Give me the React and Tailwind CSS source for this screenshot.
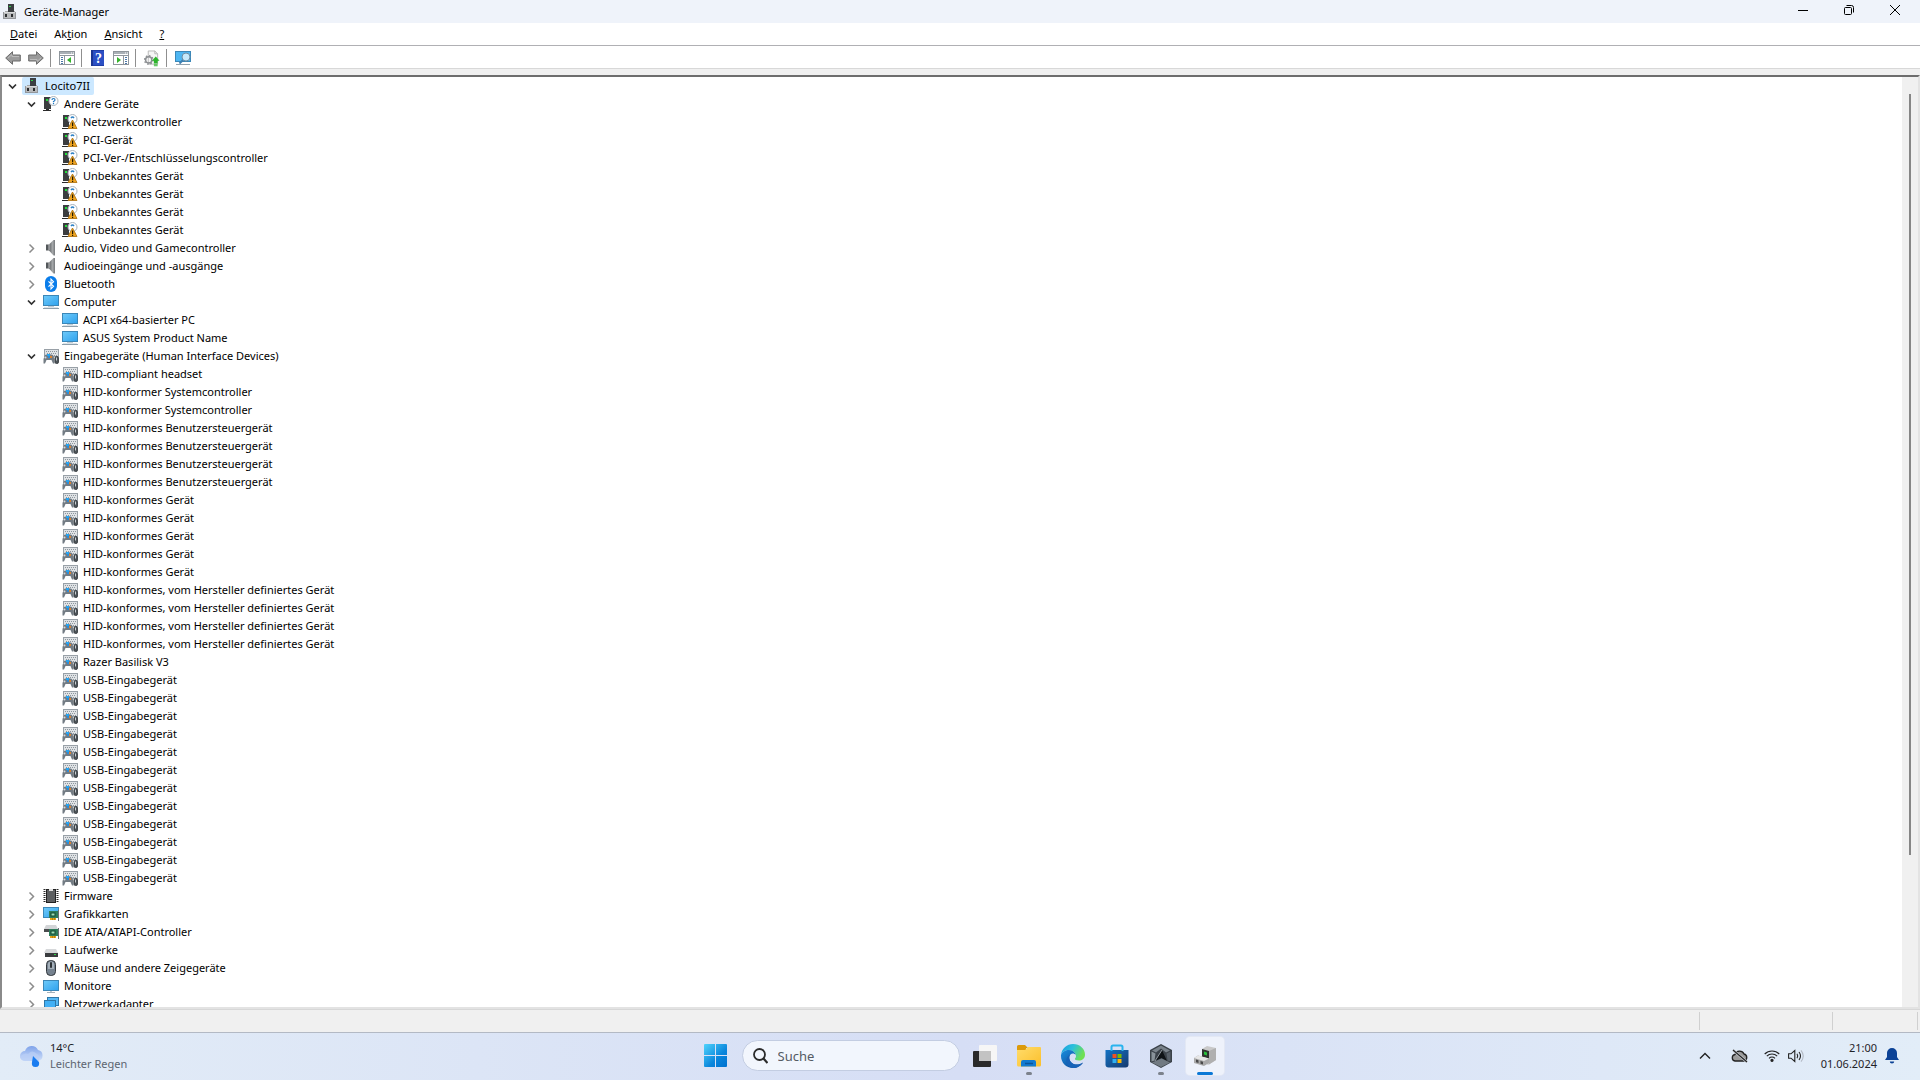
import { useState } from "react";

function RootIcon() {
  return (
    <svg width="16" height="16" viewBox="0 0 16 16" className="shrink-0">
      <rect x="6" y="0" width="6" height="9" fill="#3c3f42" />
      <rect x="7" y="2" width="2" height="1" fill="#2fd14a" />
      <path d="M3 7h3v2H3zM12 7h1v2h-1z" fill="#a4a7aa" />
      <rect x="1.500" y="8.500" width="12" height="6" fill="#b9bbbd" stroke="#93969a" />
      <rect x="2" y="8" width="11" height="1" fill="#d8dadb" />
      <rect x="3" y="10" width="2" height="3" fill="#2c2e30" />
      <rect x="9" y="10" width="2" height="3" fill="#2c2e30" />
    </svg>
  );
}

function UnknownIcon() {
  return (
    <svg width="16" height="16" viewBox="0 0 16 16" className="shrink-0">
      <rect x="1" y="1" width="7" height="12" fill="#3b3d3f" />
      <rect x="3" y="3" width="2" height="2" fill="#22e03a" />
      <path d="M0 14h8v1H0zM3 13h3v1H3z" fill="#2b2b2b" />
      <circle cx="10.500" cy="5" r="4.500" fill="#fff" stroke="#a9b2bb" />
      <path d="M9 4q0-1.500 1.500-1.500T12 4q0 .8-1.500 1.500V6.300M10.500 7v1.200" fill="none" stroke="#1f78c4" strokeWidth="1.200" />
    </svg>
  );
}

function WarningIcon() {
  return (
    <svg width="16" height="16" viewBox="0 0 16 16" className="shrink-0">
      <rect x="1" y="1" width="6" height="12" fill="#3b3d3f" />
      <rect x="3" y="3" width="2" height="2" fill="#22e03a" />
      <path d="M0 14h6v1H0z" fill="#2b2b2b" />
      <circle cx="10.500" cy="5" r="4.500" fill="#fff" stroke="#a9b2bb" />
      <path d="M9 4q1.500-2 3 0" stroke="#2a7fc4" fill="none" strokeWidth="1.500" />
      <path d="M10.500 6L15 14.500H6z" fill="#efa41f" stroke="#a86c0a" strokeWidth=".8" />
      <path d="M10 8.500h1.200v3.500H10zM10 12.800h1.200v1.200H10z" fill="#1f1600" />
    </svg>
  );
}

function SpeakerIcon() {
  return (
    <svg width="16" height="16" viewBox="0 0 16 16" className="shrink-0">
      <defs>
        <linearGradient id="spk" x1="0" x2="1">
          <stop offset="0" stopColor="#5f6265" />
          <stop offset=".6" stopColor="#a5a8aa" />
          <stop offset="1" stopColor="#74777a" />
        </linearGradient>
      </defs>
      <path d="M3 4.500h3v6H3z" fill="#53575a" />
      <path d="M6 4.500l4.500-4.500H12v15.500h-1.500L6 10.500z" fill="url(#spk)" />
      <path d="M6 4.500v6" stroke="#d9dbdc" strokeWidth=".8" />
    </svg>
  );
}

function BluetoothIcon() {
  return (
    <svg width="16" height="16" viewBox="0 0 16 16" className="shrink-0">
      <rect x="2" y="0" width="12" height="16" rx="6" fill="#0a7dea" />
      <path d="M5.500 5.300l5 5L8 12.800V3.200l2.500 2.500-5 5" fill="none" stroke="#fff" strokeWidth="1.100" />
    </svg>
  );
}

function ScreenShape({ y }) {
  return (
    <>
      <defs>
        <linearGradient id="scr" x1="0" y1="0" x2="1" y2="1">
          <stop offset="0" stopColor="#6fcaf9" />
          <stop offset="1" stopColor="#2fa2ee" />
        </linearGradient>
      </defs>
      <rect x=".5" y={y + 0.5} width="15" height="10" fill="url(#scr)" stroke="#3b87b8" />
    </>
  );
}

function ComputerIcon() {
  return (
    <svg width="16" height="16" viewBox="0 0 16 16" className="shrink-0">
      <ScreenShape y={1} />
      <path d="M5 12h6v1H5z" fill="#c2ccd3" />
      <path d="M0 14h16v1H0z" fill="#8fa0ac" />
      <path d="M1 13h14v1H1z" fill="#dce3e8" />
    </svg>
  );
}

function MonitorIcon() {
  return (
    <svg width="16" height="16" viewBox="0 0 16 16" className="shrink-0">
      <ScreenShape y={2} />
      <path d="M7 13h2v1H7z" fill="#c2ccd3" />
      <path d="M4 14h8v1H4z" fill="#a3b1bb" />
    </svg>
  );
}

function HidIcon() {
  return (
    <svg width="16" height="16" viewBox="0 0 16 16" className="shrink-0">
      <rect x="1.500" y="1.500" width="14" height="7" fill="#dfe2e5" stroke="#98a0a7" />
      <path d="M3 3.500h11M4 5.500h10M3 7.500h11" stroke="#8d969d" strokeDasharray="1 1" />
      <path d="M2 7c2-1 6-1 8 0l1.500 4v4.500H10L8.500 12h-5L2 15.500H.5V11z" fill="#737c84" />
      <circle cx="2.500" cy="9.500" r="1" fill="#d5dade" />
      <rect x="4" y="6" width="3" height="2" fill="#25a4f2" />
      <rect x="5" y="8" width="2" height="2" fill="#2c8bd6" />
      <rect x="7" y="8" width="2" height="2" fill="#d98232" />
      <rect x="12" y="8.500" width="3.500" height="7" rx="1.500" fill="#4d5459" stroke="#2f3437" strokeWidth=".8" />
      <path d="M13.500 9.500v3" stroke="#c9ced2" />
    </svg>
  );
}

function FirmwareIcon() {
  return (
    <svg width="16" height="16" viewBox="0 0 16 16" className="shrink-0">
      <path d="M1.500 1v14M14.500 1v14" stroke="#2b2b2b" strokeWidth="2" strokeDasharray="1 1" />
      <rect x="3.500" y="1.500" width="9" height="13" fill="#5d5f61" stroke="#222" />
      <path d="M6 1h4v2H6z" fill="#e0e0e0" />
    </svg>
  );
}

function Board() {
  return (
    <>
      <rect x="6" y="5" width="9" height="7" fill="#2f7d5b" />
      <rect x="8" y="7" width="4" height="3" fill="#9fe0b8" stroke="#154a33" />
      <path d="M15.500 4v11" stroke="#6a7075" />
      <path d="M7 12h6v2H7z" fill="#e8a317" />
      <path d="M9.500 12v2M11.500 12v2" stroke="#a06c05" strokeWidth=".6" />
    </>
  );
}

function GraphicsIcon() {
  return (
    <svg width="16" height="16" viewBox="0 0 16 16" className="shrink-0">
      <ScreenShape y={1} />
      <Board />
    </svg>
  );
}

function IdeIcon() {
  return (
    <svg width="16" height="16" viewBox="0 0 16 16" className="shrink-0">
      <path d="M3 1h10l2 4H1z" fill="#d3d5d7" />
      <path d="M1 5h14v3H1z" fill="#4a4c4e" />
      <Board />
    </svg>
  );
}

function DriveIcon() {
  return (
    <svg width="16" height="16" viewBox="0 0 16 16" className="shrink-0">
      <path d="M3 7h10l2 4H1z" fill="#d6d8da" />
      <path d="M2 11h13v4H2z" fill="#3b3d3f" />
      <rect x="11" y="12" width="2" height="1" fill="#35d04a" />
    </svg>
  );
}

function MouseIcon() {
  return (
    <svg width="16" height="16" viewBox="0 0 16 16" className="shrink-0">
      <rect x="3.500" y=".5" width="9" height="15" rx="4" fill="#75828f" stroke="#33383d" />
      <path d="M5 4q0-2.500 3-2.500T11 4v5H5z" fill="#a4afb9" />
      <rect x="7" y="2" width="2" height="6" rx="1" fill="#2e3337" />
    </svg>
  );
}

function NetworkIcon() {
  return (
    <svg width="16" height="16" viewBox="0 0 16 16" className="shrink-0">
      <rect x="4.500" y="1.500" width="11" height="8" fill="#56b9f5" stroke="#2f78a8" />
      <rect x="1.500" y="4.500" width="11" height="8" fill="#42b0f5" stroke="#2f78a8" />
      <path d="M4 14h6v1H4z" fill="#93a3af" />
    </svg>
  );
}

const repeat = (name, count) => Array(count).fill(name);

const categories = [
  {
    name: "Andere Geräte",
    icon: UnknownIcon,
    childIcon: WarningIcon,
    children: ["Netzwerkcontroller", "PCI-Gerät", "PCI-Ver-/Entschlüsselungscontroller", ...repeat("Unbekanntes Gerät", 4)],
  },
  { name: "Audio, Video und Gamecontroller", icon: SpeakerIcon },
  { name: "Audioeingänge und -ausgänge", icon: SpeakerIcon },
  { name: "Bluetooth", icon: BluetoothIcon },
  {
    name: "Computer",
    icon: ComputerIcon,
    childIcon: ComputerIcon,
    children: ["ACPI x64-basierter PC", "ASUS System Product Name"],
  },
  {
    name: "Eingabegeräte (Human Interface Devices)",
    icon: HidIcon,
    childIcon: HidIcon,
    children: [
      "HID-compliant headset",
      ...repeat("HID-konformer Systemcontroller", 2),
      ...repeat("HID-konformes Benutzersteuergerät", 4),
      ...repeat("HID-konformes Gerät", 5),
      ...repeat("HID-konformes, vom Hersteller definiertes Gerät", 4),
      "Razer Basilisk V3",
      ...repeat("USB-Eingabegerät", 12),
    ],
  },
  { name: "Firmware", icon: FirmwareIcon },
  { name: "Grafikkarten", icon: GraphicsIcon },
  { name: "IDE ATA/ATAPI-Controller", icon: IdeIcon },
  { name: "Laufwerke", icon: DriveIcon },
  { name: "Mäuse und andere Zeigegeräte", icon: MouseIcon },
  { name: "Monitore", icon: MonitorIcon },
  { name: "Netzwerkadapter", icon: NetworkIcon },
];

function Chevron({ open }) {
  return open ? (
    <svg width="10" height="10" viewBox="0 0 10 10">
      <path d="M1 3.500l3.500 3.500L8 3.500" fill="none" stroke="#303030" strokeWidth="1.700" />
    </svg>
  ) : (
    <svg width="10" height="10" viewBox="0 0 10 10">
      <path d="M2.500 1.500l4 4-4 4" fill="none" stroke="#8c8c8c" strokeWidth="1.500" />
    </svg>
  );
}

function Row({ name, icon: Icon, open, onToggle, selected }) {
  return (
    <div className="flex h-[18px] items-center">
      {onToggle ? (
        <button onClick={onToggle} aria-label={name} aria-expanded={open} className="flex h-[18px] w-[19px] items-center justify-center">
          <Chevron open={open} />
        </button>
      ) : (
        <span className="w-[19px]" />
      )}
      <span className={`flex h-[18px] items-center gap-[5px] rounded-xs pr-1 pl-[2px] whitespace-nowrap ${selected ? "bg-[#cce8ff]" : ""}`}>
        <Icon />
        {name}
      </span>
    </div>
  );
}

function Category({ item, startOpen }) {
  const [open, setOpen] = useState(startOpen);
  return (
    <li>
      <Row name={item.name} icon={item.icon} open={open} onToggle={() => setOpen(!open)} />
      {open && item.children && (
        <ul className="pl-[19px]">
          {item.children.map((child, i) => (
            <li key={i}>
              <Row name={child} icon={item.childIcon} />
            </li>
          ))}
        </ul>
      )}
    </li>
  );
}

function DeviceTree() {
  const [open, setOpen] = useState(true);
  return (
    <ul className="pl-px">
      <li>
        <Row name="Locito7II" icon={RootIcon} open={open} onToggle={() => setOpen(!open)} selected />
        {open && (
          <ul className="pl-[19px]">
            {categories.map((item) => (
              <Category key={item.name} item={item} startOpen={Boolean(item.children)} />
            ))}
          </ul>
        )}
      </li>
    </ul>
  );
}

function TitleBar() {
  return (
    <header className="flex h-[23px] shrink-0 items-center bg-[#eff3fa] pr-[2px] pl-[2px]">
      <RootIcon />
      <h1 className="ml-[6px] flex-1">Geräte-Manager</h1>
      <div className="flex h-full pb-[3px]">
        <button aria-label="Minimieren" className="flex w-[46px] items-center justify-center">
          <svg width="10" height="10" viewBox="0 0 10 10"><path d="M0 5.500h10" stroke="#000" /></svg>
        </button>
        <button aria-label="Verkleinern" className="flex w-[45px] items-center justify-center">
          <svg width="10" height="10" viewBox="0 0 10 10" fill="none" stroke="#000">
            <rect x=".5" y="2.500" width="7" height="7" rx="1" />
            <path d="M2.500.5H7.500q2 0 2 2V7.500" />
          </svg>
        </button>
        <button aria-label="Schließen" className="flex w-[47px] items-center justify-center">
          <svg width="10" height="10" viewBox="0 0 10 10"><path d="M0 0l10 10M10 0L0 10" stroke="#000" /></svg>
        </button>
      </div>
    </header>
  );
}

function MenuBar() {
  return (
    <nav className="flex h-[23px] shrink-0 items-center gap-[17px] border-b border-[#b0b0b4] bg-white pl-[10px]">
      <button><u>D</u>atei</button>
      <button>Ak<u>t</u>ion</button>
      <button><u>A</u>nsicht</button>
      <button><u>?</u></button>
    </nav>
  );
}

function Separator() {
  return <span className="h-[18px] w-px bg-[#8f8f8f]" />;
}

function Arrow({ flip }) {
  return (
    <svg width="16" height="14" viewBox="0 0 16 14" className={flip ? "rotate-180" : ""}>
      <path d="M.7 7L7.500.7V4h7.800v6H7.500v3.300z" fill="#9b9b9b" stroke="#6b6b6b" />
      <path d="M3 7l4-3.500V5.500h7" fill="none" stroke="#bcbcbc" />
    </svg>
  );
}

function PaneIcon({ right }) {
  return (
    <svg width="16" height="14" viewBox="0 0 16 14">
      <rect x=".5" y=".5" width="15" height="13" fill="#fff" stroke="#8f969c" />
      <path d="M1 1h14v2H1z" fill="#a9b0b6" />
      <path d="M1 4.500h14" stroke="#8f969c" />
      <path d="M12 2h1M14 2h1" stroke="#fff" />
      {right ? (
        <>
          <path d="M10.500 5v9" stroke="#8f969c" />
          <path d="M12 6.500h2M12 8.500h2M12 10.500h2M12 12.500h2" stroke="#4a77a8" />
          <path d="M4 6l4 3-4 3z" fill="#33b32a" />
        </>
      ) : (
        <>
          <path d="M5.500 5v9" stroke="#8f969c" />
          <path d="M2 6.500h2M2 8.500h2M2 10.500h2M2 12.500h2" stroke="#4a77a8" />
          <path d="M12 6L8 9l4 3z" fill="#33b32a" />
        </>
      )}
    </svg>
  );
}

function ToolBar() {
  return (
    <div className="flex h-[23px] shrink-0 items-center border-b border-[#d8d8d8] bg-white pt-[2px] pl-[5px]">
      <button aria-label="Zurück"><Arrow /></button>
      <button aria-label="Vorwärts" className="mr-[6px] ml-[7px]"><Arrow flip /></button>
      <Separator />
      <button aria-label="Konsolenstruktur" className="mr-[6px] ml-2"><PaneIcon /></button>
      <Separator />
      <button aria-label="Hilfe" className="mx-[9px]">
        <svg width="13" height="16" viewBox="0 0 13 16">
          <rect width="13" height="16" fill="#2b4fc4" />
          <path d="M0 0h2v16H0z" fill="#1b3590" />
          <path d="M2 0h11v1H2zM2 15h11v1H2z" fill="#1f3da5" />
          <text x="7.500" y="13" fontSize="14" fontWeight="700" textAnchor="middle" fill="#fff" fontFamily="Liberation Serif">?</text>
        </svg>
      </button>
      <button aria-label="Aktionsbereich" className="mr-[6px]"><PaneIcon right /></button>
      <Separator />
      <button aria-label="Treiber aktualisieren" className="mr-[6px] ml-2">
        <svg width="16" height="17" viewBox="0 0 17 17">
          <path d="M4.500.5h7l3 3v11h-10z" fill="#f6f6f6" stroke="#b5b5b5" />
          <path d="M11.500.5v3h3" fill="none" stroke="#b5b5b5" />
          <circle cx="5" cy="10" r="3.300" fill="none" stroke="#8c8f92" strokeWidth="1.600" />
          <circle cx="5" cy="10" r="4.500" fill="none" stroke="#8c8f92" strokeWidth="1.500" strokeDasharray="1.600 1.900" />
          <path d="M12.500 6.500l4 4.500h-2v2.500h-4V11h-2z" fill="#2bb52b" />
          <path d="M10.500 14.500h4M10.500 16.200h4" stroke="#2bb52b" />
        </svg>
      </button>
      <Separator />
      <button aria-label="Nach geänderter Hardware suchen" className="ml-2">
        <svg width="17" height="16" viewBox="0 0 17 16">
          <rect x=".5" y="1.500" width="15" height="10" fill="#4db6f2" stroke="#3b87b8" />
          <path d="M1 14.500h14" stroke="#93a3af" />
          <circle cx="11" cy="7" r="4" fill="#c6e9fb" stroke="#6f8fa4" />
          <path d="M8 10l-3.500 3.500" stroke="#3f7fb0" strokeWidth="2" />
        </svg>
      </button>
    </div>
  );
}

function WeatherIcon() {
  return (
    <svg width="25" height="22" viewBox="0 0 25 22">
      <defs>
        <linearGradient id="cloud" x1="0" y1="0" x2="0" y2="1">
          <stop offset="0" stopColor="#7fa3ea" />
          <stop offset="1" stopColor="#cfdff9" />
        </linearGradient>
      </defs>
      <path d="M6 16a5 5 0 010-10 7 7 0 0113-1 5.600 5.600 0 010 11z" fill="url(#cloud)" />
      <path d="M1 12q4-5 8-3 4-5 9 0 3 1 2 7H6q-4 0-5-4z" fill="#b9cff6" opacity=".7" />
      <path d="M14 11l6 6q1 5-3.500 5T13 17z" fill="#1b7df0" />
    </svg>
  );
}

function StartIcon() {
  return (
    <svg width="23" height="23" viewBox="0 0 23 23">
      <defs>
        <linearGradient id="win" x1="0" y1="0" x2="1" y2="1">
          <stop offset="0" stopColor="#4fd3fc" />
          <stop offset=".6" stopColor="#0a86dc" />
          <stop offset="1" stopColor="#0071cf" />
        </linearGradient>
      </defs>
      <path d="M0 1q0-1 1-1h10v11H0zM12 0h10q1 0 1 1v10H12zM0 12h11v11H1q-1 0-1-1zM12 12h11v10q0 1-1 1H12z" fill="url(#win)" />
    </svg>
  );
}

function TaskViewIcon() {
  return (
    <svg width="24" height="22" viewBox="0 0 24 22">
      <rect x="0" y="6" width="18" height="16" rx="1" fill="#2a2a2a" />
      <rect x="6" y="0" width="18" height="16" rx="1" fill="#f6f6f6" />
      <path d="M6 6h12v10H6z" fill="#c3c3c3" />
    </svg>
  );
}

function ExplorerIcon() {
  return (
    <svg width="24" height="22" viewBox="0 0 24 22">
      <defs>
        <linearGradient id="fld" x1="0" y1="0" x2="1" y2="1">
          <stop offset="0" stopColor="#ffdc6b" />
          <stop offset="1" stopColor="#fbbf2b" />
        </linearGradient>
      </defs>
      <path d="M0 1.500Q0 0 1.500 0H8l3 3h-2v5H0z" fill="#dc9a0a" />
      <path d="M0 5h8l3-3h12q1 0 1 1v17q0 1.500-1.500 1.500h-21Q0 21.500 0 20z" fill="url(#fld)" />
      <path d="M4 21.500V17q0-2 2-2h11q2 0 2 2v4.500z" fill="#127ad0" />
      <path d="M8 18.500h8" stroke="#0a5499" strokeWidth="1.500" />
    </svg>
  );
}

function EdgeIcon() {
  return (
    <svg width="24" height="24" viewBox="0 0 24 24">
      <defs>
        <linearGradient id="edgeTop" x1="0" y1="0" x2="1" y2=".4">
          <stop offset="0" stopColor="#1a9be0" />
          <stop offset=".5" stopColor="#2cc0dc" />
          <stop offset="1" stopColor="#6fe052" />
        </linearGradient>
        <linearGradient id="edgeLow" x1="0" y1="0" x2="1" y2="1">
          <stop offset="0" stopColor="#1a8ede" />
          <stop offset="1" stopColor="#0c3f8e" />
        </linearGradient>
      </defs>
      <path d="M0 11C1 4 6 0 12 0c7 0 12 5 12 10.500 0 4-3 6-6 6-3 0-4.500-1-4-2 1-1 1.200-2 .8-3.500C14 8 11 6 8 6c-4 0-7 2-8 5z" fill="url(#edgeTop)" />
      <path d="M0 11c1-3 4-5 8-5 3.500 0 6 2 6.800 5-1.300-1.800-3.800-2-5.300-.5-2 2-1.500 6 1.500 8.500 3 2.300 7.500 2 11-.5C20 22 16 24 12 24 5 24 0 18.500 0 12z" fill="url(#edgeLow)" />
      <path d="M9.500 10.500c-2 2-1.500 6 1.500 8.500 3 2.300 7.500 2 11-.5C20 22 16 24 12 24c-5-1-7.500-5-6.500-9 .5-2 2-4 4-4.500z" fill="#1763b8" />
    </svg>
  );
}

function StoreIcon() {
  return (
    <svg width="24" height="24" viewBox="0 0 24 24">
      <defs>
        <linearGradient id="bag" x1="0" y1="0" x2="1" y2="1">
          <stop offset="0" stopColor="#1272c4" />
          <stop offset="1" stopColor="#173a6e" />
        </linearGradient>
      </defs>
      <path d="M.5 6h23v14.500q0 3-3 3h-17q-3 0-3-3z" fill="url(#bag)" />
      <path d="M6.500 7V3q0-1.500 1.500-1.500h8q1.500 0 1.500 1.500v4" fill="none" stroke="#29b3ee" strokeWidth="2" />
      <path d="M7.500 10h4v4h-4z" fill="#f25022" />
      <path d="M12.500 10h4v4h-4z" fill="#7fba00" />
      <path d="M7.500 15h4v4h-4z" fill="#30b0f0" />
      <path d="M12.500 15h4v4h-4z" fill="#ffb900" />
    </svg>
  );
}

function ArmouryIcon() {
  return (
    <svg width="22" height="24" viewBox="0 0 22 24">
      <path d="M11 0l11 6v12l-11 6L0 18V6z" fill="#3b4249" />
      <path d="M11 1.500l9 5-4 2-5-4-5 4-4-2z" fill="#7a838b" />
      <path d="M1.500 7.500l4 2-1 7-3 1z" fill="#8a939a" />
      <path d="M20.500 7.500v10l-3-1-1-7z" fill="#59616a" />
      <path d="M12 6l5 11-5.500-3L5 17z" fill="#0f1316" />
      <path d="M2 18.500l9.500-4 8.500 4-9 4.500z" fill="#717a82" />
      <path d="M12 6L5 17" stroke="#aeb6bd" strokeWidth=".8" />
    </svg>
  );
}

function DeviceManagerIcon() {
  return (
    <svg width="22" height="22" viewBox="0 0 22 22">
      <path d="M8 4l5-3 9 2v12l-8 5-6-5z" fill="#c9c9c9" />
      <path d="M15 6l7-3v12l-7 4.500z" fill="#b0b0b0" />
      <path d="M8 4l7 2v8l-7-2z" fill="#303430" />
      <path d="M10 6.500l3 1v3l-3-1z" fill="#26c13a" />
      <path d="M0 13l4-2.500 11 3V18l-5 3-10-3z" fill="#a9a9a9" />
      <path d="M0 13l4-2.500 11 3-5 2.500z" fill="#e6e6e6" />
      <path d="M2 14.500l2.500.8V18L2 17.300zM6.500 16l2.500.8v2.600l-2.500-.7z" fill="#4a4a4a" />
    </svg>
  );
}

const apps = [
  { name: "Taskansicht", icon: TaskViewIcon },
  { name: "Explorer", icon: ExplorerIcon, running: true },
  { name: "Microsoft Edge", icon: EdgeIcon },
  { name: "Microsoft Store", icon: StoreIcon },
  { name: "Armoury Crate", icon: ArmouryIcon, running: true },
  { name: "Geräte-Manager", icon: DeviceManagerIcon, active: true },
];

function TaskButton({ app }) {
  const Icon = app.icon;
  return (
    <button aria-label={app.name} className="flex h-[45px] w-11 items-center justify-center">
      <span className={`relative flex h-[38px] w-[38px] items-center justify-center rounded ${app.active ? "bg-[#eef2fb] ring-1 ring-[#e3e8f4]" : ""}`}>
        <Icon />
        {app.running && <span className="absolute bottom-0 h-[3px] w-[6px] rounded-full bg-[#7c828c]" />}
        {app.active && <span className="absolute bottom-0 h-[3px] w-4 rounded-full bg-[#0a78d6]" />}
      </span>
    </button>
  );
}

function Taskbar() {
  return (
    <footer className="grid h-12 shrink-0 grid-cols-[1fr_auto_1fr] items-center border-t border-[#b3b9c4] bg-linear-to-r from-[#e2ecf7] via-[#d6def5] to-[#e2edf8] pb-[2px] font-['Noto_Sans',sans-serif] text-[11px] leading-4 text-[#1f2328]">
      <button className="flex items-center gap-[6px] justify-self-start pl-[19px] text-left">
        <WeatherIcon />
        <span>
          <span className="block">14°C</span>
          <span className="block text-[#5c6470]">Leichter Regen</span>
        </span>
      </button>
      <div className="flex items-center">
        <button aria-label="Start" className="flex h-[45px] w-11 items-center justify-center">
          <StartIcon />
        </button>
        <label className="mr-[3px] ml-1 flex h-[31px] w-[218px] items-center gap-[10px] rounded-full border border-[#c3cde2] bg-[#f2f6fd] pl-[10px]">
          <svg width="15" height="16" viewBox="0 0 15 16" fill="none" stroke="#2b2b2b">
            <circle cx="6.500" cy="6.500" r="5.500" strokeWidth="1.800" />
            <path d="M10.500 10.500l4 4.500" strokeWidth="2.200" />
          </svg>
          <input type="text" placeholder="Suche" aria-label="Suche" className="w-40 bg-transparent text-[13px] outline-none placeholder:text-[#555b64]" />
        </label>
        {apps.map((app) => (
          <TaskButton key={app.name} app={app} />
        ))}
      </div>
      <div className="flex items-center justify-self-end pr-[21px]">
        <button aria-label="Ausgeblendete Symbole" className="mr-5">
          <svg width="12" height="8" viewBox="0 0 12 8"><path d="M1 6.500l5-5 5 5" fill="none" stroke="#222" strokeWidth="1.400" /></svg>
        </button>
        <button aria-label="OneDrive" className="mr-4">
          <svg width="17" height="14" viewBox="0 0 17 14">
            <path d="M4 12a3.300 3.300 0 010-6.500 4.800 4.800 0 019-.5 3.600 3.600 0 010 7z" fill="#9a9a9a" stroke="#222" strokeWidth="1.300" />
            <path d="M2 1l14 12" stroke="#c9ced4" strokeWidth="2.400" />
            <path d="M2 1l14 12" stroke="#222" strokeWidth="1.200" />
          </svg>
        </button>
        <button aria-label="WLAN" className="mr-2">
          <svg width="16" height="13" viewBox="0 0 16 13" fill="none" stroke="#222" strokeWidth="1.100">
            <path d="M.7 5a10.300 10.300 0 0114.600 0M2.800 7.200a7.300 7.300 0 0110.400 0M5 9.300a4.300 4.300 0 016 0" />
            <circle cx="8" cy="11.300" r="1.100" fill="#222" />
          </svg>
        </button>
        <button aria-label="Lautstärke" className="mr-[17px]">
          <svg width="16" height="14" viewBox="0 0 16 14" fill="none" stroke="#222" strokeWidth="1.100">
            <path d="M.6 4.800H3L6.800 1.500v11L3 9.200H.6z" />
            <path d="M9 4.800q1.500 2.200 0 4.400M11 3q3 4 0 8" />
            <path d="M13 1.300q4.500 5.700 0 11.400" stroke="#b3bac4" />
          </svg>
        </button>
        <time className="mr-2 text-right">
          <span className="block">21:00</span>
          <span className="block">01.06.2024</span>
        </time>
        <button aria-label="Benachrichtigungen">
          <svg width="14" height="16" viewBox="0 0 14 16" fill="#0b4296">
            <path d="M7 0a5 5 0 015 5v4l2 3H0l2-3V5a5 5 0 015-5zM4.800 13.500h4.400a2.200 2 0 01-4.400 0z" />
          </svg>
        </button>
      </div>
    </footer>
  );
}

export default function App() {
  return (
    <div className="flex h-screen flex-col overflow-hidden bg-[#f0f0f0] font-['Noto_Sans',sans-serif] text-[11px] leading-4 text-black">
      <TitleBar />
      <MenuBar />
      <ToolBar />
      <main className="mt-[6px] flex min-h-0 flex-1 border-2 border-t-[#6d6d6d] border-r-[#e3e3e3] border-b-[#e3e3e3] border-l-[#8a8a8a] bg-white">
        <div className="min-w-0 flex-1 overflow-hidden">
          <DeviceTree />
        </div>
        {/* Bildlaufleiste */}
        <div className="flex w-4 justify-center bg-[#f0f0f0] pt-[17px]">
          <div className="h-5/6 w-[2px] bg-[#868686]" />
        </div>
      </main>
      <div className="flex h-[23px] shrink-0 justify-end border-t border-[#d7d7d7] py-[2px]">
        <span className="w-[133px] border-l border-[#d0d0d0]" />
        <span className="w-[85px] border-l border-[#d0d0d0]" />
        <span className="w-[3px] border-l border-[#d0d0d0]" />
      </div>
      <Taskbar />
    </div>
  );
}
